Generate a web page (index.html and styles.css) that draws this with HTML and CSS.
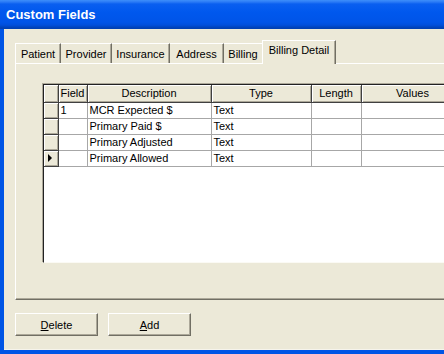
FILE: index.html
```html
<html>

<head>
	<link rel="stylesheet" href="styles.css">
</head>

<body>
	<div class="window">
		<div class="titlebar">Custom Fields</div>

		<div class="frame">
			<div class="client">
				<div class="tabs">
					<div class="tab w-patient">Patient</div>
					<div class="tab w-provider">Provider</div>
					<div class="tab w-insurance">Insurance</div>
					<div class="tab w-address">Address</div>
					<div class="tab w-billing">Billing</div>
					<div class="tab active">Billing Detail</div>
				</div>

				<div class="panel">
					<div class="grid">
						<table>
							<colgroup>
								<col class="c-sel">
								<col class="c-field">
								<col class="c-desc">
								<col class="c-type">
								<col class="c-len">
								<col class="c-val">
							</colgroup>
							<tr class="head">
								<th class="sel"></th>
								<th>Field</th>
								<th>Description</th>
								<th>Type</th>
								<th>Length</th>
								<th>Values</th>
							</tr>
							<tr>
								<td class="sel"></td>
								<td>1</td>
								<td>MCR Expected $</td>
								<td>Text</td>
								<td></td>
								<td></td>
							</tr>
							<tr>
								<td class="sel"></td>
								<td></td>
								<td>Primary Paid $</td>
								<td>Text</td>
								<td></td>
								<td></td>
							</tr>
							<tr>
								<td class="sel"></td>
								<td></td>
								<td>Primary Adjusted</td>
								<td>Text</td>
								<td></td>
								<td></td>
							</tr>
							<tr>
								<td class="sel"><span class="arrow"></span></td>
								<td></td>
								<td>Primary Allowed</td>
								<td>Text</td>
								<td></td>
								<td></td>
							</tr>
						</table>
					</div>
				</div>

				<div class="buttons">
					<button><u>D</u>elete</button>
					<button><u>A</u>dd</button>
				</div>
			</div>
		</div>
	</div>
</body>

</html>
```

FILE: styles.css
```css
:root {
	--face: #ece9d8;
	--shadow: #aca899;
	--dark: #716f64;
	--xp-blue: #0055e5;
}

body {
	margin: 0;
	overflow: hidden;
	font-family: "Liberation Sans", Arial, sans-serif;
	font-size: 11px;
	color: #000;
}

.window {
	width: 444px;
	height: 354px;
	display: flex;
	flex-direction: column;
	background: var(--face);
	overflow: hidden;
}

.titlebar {
	height: 29px;
	box-sizing: border-box;
	padding: 7px 0 0 6px;
	color: white;
	font-weight: bold;
	font-size: 13px;
	background: linear-gradient(#3d8ffa 0px, #2a7af6 2px, #0a5ff0 4px, #0058ee 12px, #0054e8 22px, #004fdc 25px, #0040b4 28px);
}

.frame {
	flex: 1;
	display: flex;
	border-left: 4px solid var(--xp-blue);
	border-bottom: 4px solid var(--xp-blue);
	box-shadow: inset 0 -1px #f6f4ec;
}

.client {
	flex: 1;
	padding: 11px 0 0 11px;
	display: flex;
	flex-direction: column;
}

/* tabs */
.tabs {
	display: flex;
	align-items: flex-end;
	height: 23px;
}

.tab {
	height: 20px;
	box-sizing: border-box;
	padding-top: 4px;
	text-align: center;
	border-top: 1px solid #fff;
	border-left: 1px solid #fff;
	border-right: 1px solid var(--dark);
	box-shadow: inset -1px 0 var(--shadow);
}

.w-patient { width: 46px; }
.w-provider { width: 51px; border-left: none; }
.w-insurance { width: 58px; border-left: none; }
.w-address { width: 54px; border-left: none; }
.w-billing { width: 38px; border-left: none; border-right: none; box-shadow: none; }

.tab.active {
	width: 74px;
	height: 24px;
	padding-top: 3px;
	margin-bottom: -1px;
	background: var(--face);
	position: relative;
	z-index: 1;
}

/* panel */
.panel {
	width: 470px;
	height: 237px;
	box-sizing: border-box;
	border-top: 1px solid #fff;
	border-left: 1px solid #fff;
	border-bottom: 1px solid var(--dark);
	box-shadow: inset 0 -1px var(--shadow);
	padding: 20px 0 0 27px;
}

.grid {
	height: 179px;
	background: #fff;
	border-top: 1px solid #222;
	border-left: 1px solid #222;
	border-bottom: 1px solid #fbfaf4;
	box-sizing: border-box;
	box-shadow: -1px -1px var(--shadow);
}

table {
	border-collapse: collapse;
	table-layout: fixed;
	width: 420px;
	font-family: inherit;
	font-size: 11px;
}

.c-sel { width: 14px; }
.c-field { width: 29px; }
.c-desc { width: 124px; }
.c-type { width: 100px; }
.c-len { width: 50px; }
.c-val { width: 103px; }

tr {
	height: 16px;
}

tr.head {
	height: 17px;
}

th {
	padding: 0;
	font-weight: normal;
	background: var(--face);
	border-right: 1px solid #404040;
	border-bottom: 1px solid #404040;
	box-shadow: inset 1px 1px #fff, inset -1px -1px var(--shadow);
}

td {
	padding: 0 0 0 2px;
	white-space: nowrap;
	overflow: hidden;
	border-right: 1px solid #a7a7a7;
	border-bottom: 1px solid #a7a7a7;
}

td.sel,
th.sel {
	padding: 0;
	background: var(--face);
	border-right: 1px solid #404040;
	border-bottom: 1px solid #404040;
	box-shadow: inset 1px 1px #fff, inset -1px -1px var(--shadow);
}

.arrow {
	display: block;
	width: 0;
	height: 0;
	margin-left: 4px;
	border-top: 4px solid transparent;
	border-bottom: 4px solid transparent;
	border-left: 4px solid #000;
}

/* buttons */
.buttons {
	display: flex;
	gap: 10px;
	margin-top: 13px;
}

button {
	width: 83px;
	height: 23px;
	padding: 0;
	font-family: inherit;
	font-size: 11px;
	color: #000;
	background: var(--face);
	border: 1px solid;
	border-color: #fff var(--dark) var(--dark) #fff;
	box-shadow: inset -1px -1px var(--shadow);
	border-radius: 0;
}
```
